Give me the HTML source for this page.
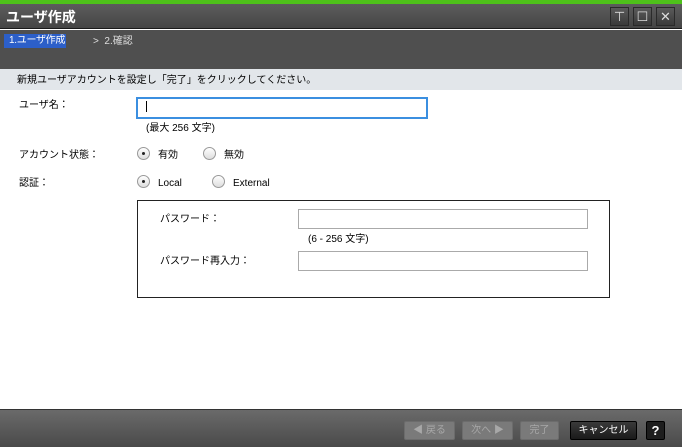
<!DOCTYPE html>
<html><head><meta charset="utf-8"><style>
*{margin:0;padding:0;box-sizing:border-box}
body{width:682px;height:447px;overflow:hidden;background:#fff;font-family:"Liberation Sans","Noto Sans CJK JP",sans-serif;font-size:10px;line-height:12px;color:#000;position:relative}
.abs{position:absolute;white-space:nowrap}
.radio{position:absolute;width:13px;height:13px;border-radius:50%;border:1px solid #999;background:linear-gradient(#fff,#ddd)}
.radio.on::after{content:"";position:absolute;left:4px;top:4px;width:3px;height:3px;border-radius:50%;background:#222}
.inp{position:absolute;border:1px solid #aaa;background:#fff}
.btn{position:absolute;top:421px;height:19px;border-radius:2px;font-size:10px;text-align:center;line-height:17px;white-space:nowrap}
.dis{background:#7a7a7a;color:#a8a8a8;border:1px solid #6c6c6c}
.wbtn{position:absolute;top:7px;width:19px;height:19px;border:1px solid #2a2a2a;background:linear-gradient(#5a5a5a,#3a3a3a);color:#ddd;text-align:center;line-height:17px;font-size:13px}
</style></head><body>
<div class="abs" style="left:0;top:0;width:682px;height:4px;background:#4ec11a"></div>
<div class="abs" style="left:0;top:4px;width:682px;height:25px;background:linear-gradient(#5c5c5c,#454545);border-bottom:1px solid #1a1a1a"></div>
<div class="abs" style="left:6px;top:9px;color:#fff;font-size:14px;line-height:16px;font-weight:bold">ユーザ作成</div>
<div class="wbtn" style="left:610px">⊤</div>
<div class="wbtn" style="left:633px">☐</div>
<div class="wbtn" style="left:656px">✕</div>
<div class="abs" style="left:0;top:30px;width:682px;height:39px;background:#4f4f4f"></div>
<div class="abs" style="left:4px;top:34px;width:62px;height:14px;background:#2c5fc9;color:#fff;padding-left:5px;line-height:14px;letter-spacing:-0.3px">1.ユーザ作成</div>
<div class="abs" style="left:93px;top:36px;color:#ddd">&gt;&nbsp;&nbsp;2.確認</div>
<div class="abs" style="left:0;top:69px;width:682px;height:21px;background:#e2e6ea"></div>
<div class="abs" style="left:17px;top:75px">新規ユーザアカウントを設定し「完了」をクリックしてください。</div>
<div class="abs" style="left:19px;top:100px">ユーザ名：</div>
<div class="inp" style="left:136px;top:97px;width:292px;height:22px;border:2px solid #3b8fe0"></div>
<div class="abs" style="left:146px;top:101px;width:1px;height:11px;background:#000"></div>
<div class="abs" style="left:146px;top:123px">(最大 256 文字)</div>
<div class="abs" style="left:19px;top:150px">アカウント状態：</div>
<div class="radio on" style="left:137px;top:147px"></div><div class="abs" style="left:158px;top:150px">有効</div>
<div class="radio" style="left:203px;top:147px"></div><div class="abs" style="left:224px;top:150px">無効</div>
<div class="abs" style="left:19px;top:178px">認証：</div>
<div class="radio on" style="left:137px;top:175px"></div><div class="abs" style="left:158px;top:178px">Local</div>
<div class="radio" style="left:212px;top:175px"></div><div class="abs" style="left:233px;top:178px">External</div>
<div class="abs" style="left:137px;top:200px;width:473px;height:98px;border:1px solid #222"></div>
<div class="abs" style="left:160px;top:214px">パスワード：</div>
<div class="inp" style="left:298px;top:209px;width:290px;height:20px"></div>
<div class="abs" style="left:308px;top:234px">(6 - 256 文字)</div>
<div class="abs" style="left:160px;top:256px">パスワード再入力：</div>
<div class="inp" style="left:298px;top:251px;width:290px;height:20px"></div>
<div class="abs" style="left:0;top:409px;width:682px;height:38px;background:linear-gradient(#6a6a6a,#4a4a4a);border-top:1px solid #333"></div>
<div class="btn dis" style="left:404px;width:51px">◀ 戻る</div>
<div class="btn dis" style="left:462px;width:51px">次へ ▶</div>
<div class="btn dis" style="left:520px;width:39px">完了</div>
<div class="btn" style="left:570px;width:67px;background:linear-gradient(#3a3a3a,#1a1a1a);border:1px solid #000;color:#fff">キャンセル</div>
<div class="btn" style="left:646px;width:19px;background:#1e1e1e;border:1px solid #000;color:#fff;font-weight:bold;font-size:13px">?</div>
</body></html>
